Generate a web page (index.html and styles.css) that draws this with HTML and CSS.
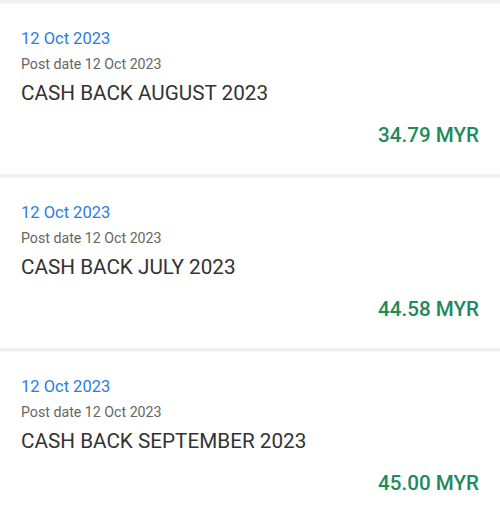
FILE: index.html
```html
<!DOCTYPE html>
<html lang="en">
<head>
    <meta charset="UTF-8">
    <meta name="viewport" content="width=device-width, initial-scale=1.0">
    <title>Transactions</title>
    <link rel="stylesheet" href="styles.css">
</head>
<body>
    <main class="list">
        <section class="txn">
            <p class="txn-date">12 Oct 2023</p>
            <p class="txn-post">Post date 12 Oct 2023</p>
            <p class="txn-title">CASH BACK AUGUST 2023</p>
            <p class="txn-amount">34.79 MYR</p>
        </section>
        <section class="txn">
            <p class="txn-date">12 Oct 2023</p>
            <p class="txn-post">Post date 12 Oct 2023</p>
            <p class="txn-title">CASH BACK JULY 2023</p>
            <p class="txn-amount">44.58 MYR</p>
        </section>
        <section class="txn">
            <p class="txn-date">12 Oct 2023</p>
            <p class="txn-post">Post date 12 Oct 2023</p>
            <p class="txn-title">CASH BACK SEPTEMBER 2023</p>
            <p class="txn-amount">45.00 MYR</p>
        </section>
    </main>
</body>
</html>
```
FILE: styles.css
```css
body {
    margin: 0;
    font-family: Roboto, "Liberation Sans", sans-serif;
    background-color: #fff;
}

.list {
    display: flex;
    flex-direction: column;
}

.txn {
    border-top: 3px solid #f0f0f0;
    box-shadow: inset 0 1px 1px rgba(0, 0, 0, 0.03);
    padding: 26px 21px 27px 21px;
}

.txn p {
    margin: 0;
}

.txn-date {
    font-size: 16.5px;
    line-height: 20px;
    color: #2a7de1;
}

.txn-post {
    margin-top: 5px !important;
    font-size: 14.2px;
    line-height: 20px;
    color: #666;
}

.txn-title {
    margin-top: 6px !important;
    font-size: 20.7px;
    line-height: 26px;
    color: #333;
}

.txn-amount {
    margin-top: 17px !important;
    font-size: 20.6px;
    line-height: 24px;
    font-weight: 500;
    color: #1f8a5b;
    text-align: right;
}
```
